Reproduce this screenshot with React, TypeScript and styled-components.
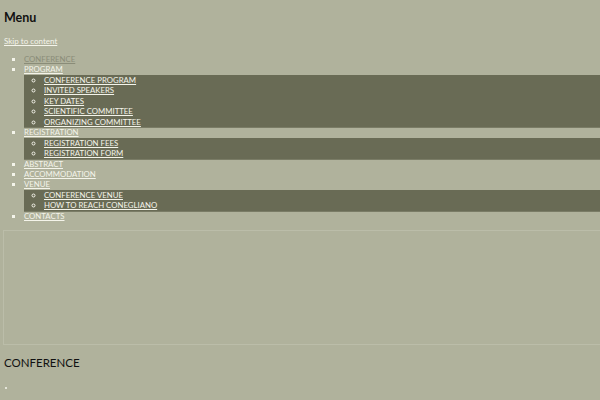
import React from "react";
import styled, { createGlobalStyle } from "styled-components";

const Global = createGlobalStyle`
  html, body { margin: 0; padding: 0; background: #b0b29c; }
  body { font-family: Lato, "Open Sans", sans-serif; overflow: hidden; }
`;

const Page = styled.div`
  padding: 0 0 0 4px;
  height: 400px;
  box-sizing: border-box;
  color: #1a1a14;
`;

const MenuTitle = styled.h2`
  margin: 0;
  padding-top: 9px;
  font-size: 12.5px;
  line-height: 17px;
  font-weight: 700;
  font-family: Lato, sans-serif;
  color: #111;
`;

const Skip = styled.a`
  display: block;
  margin-top: 10px;
  font-size: 8px;
  line-height: 10px;
  color: #f4f4ea;
  text-decoration: underline;
`;

const MainList = styled.ul`
  margin: 8px 0 0 -4px;
  padding: 0 0 0 24px;
  list-style: square;
  color: #f4f4ea;
  font-size: 7.8px;
  line-height: 10.45px;
`;

const Item = styled.li``;

const SubList = styled.ul`
  margin: 0;
  padding: 0 0 0 20px;
  list-style: circle;
  background: #696b55;
  box-shadow: 0 1px 0 #7a7c66;
`;

const Link = styled.a<{ $current?: boolean }>`
  color: ${(p) => (p.$current ? "#8a8c78" : "#f4f4ea")};
  text-decoration: underline;
  text-transform: uppercase;
`;

const Frame = styled.div`
  margin: 9px -20px 0 -1px;
  height: 113px;
  border: 1px solid #bbbda9;
`;

const Heading = styled.h1`
  margin: 11px 0 0 0;
  font-size: 11.5px;
  line-height: 14px;
  font-weight: 400;
  color: #111;
`;

const Dot = styled.div`
  margin: 17px 0 0 1px;
  width: 2px;
  height: 2px;
  background: #e4e4d8;
`;

type Node = { label: string; current?: boolean; children?: string[] };

const menu: Node[] = [
  { label: "Conference", current: true },
  {
    label: "Program",
    children: [
      "Conference Program",
      "Invited Speakers",
      "Key Dates",
      "Scientific Committee",
      "Organizing Committee",
    ],
  },
  { label: "Registration", children: ["Registration Fees", "Registration Form"] },
  { label: "Abstract" },
  { label: "Accommodation" },
  { label: "Venue", children: ["Conference Venue", "How to reach Conegliano"] },
  { label: "Contacts" },
];

export default function App() {
  return (
    <>
      <Global />
      <Page>
        <MenuTitle>Menu</MenuTitle>
        <Skip href="#">Skip to content</Skip>
        <MainList>
          {menu.map((n) => (
            <Item key={n.label}>
              <Link href="#" $current={n.current}>
                {n.label}
              </Link>
              {n.children && (
                <SubList>
                  {n.children.map((c) => (
                    <Item key={c}>
                      <Link href="#">{c}</Link>
                    </Item>
                  ))}
                </SubList>
              )}
            </Item>
          ))}
        </MainList>
        <Frame />
        <Heading>CONFERENCE</Heading>
        <Dot />
      </Page>
    </>
  );
}
